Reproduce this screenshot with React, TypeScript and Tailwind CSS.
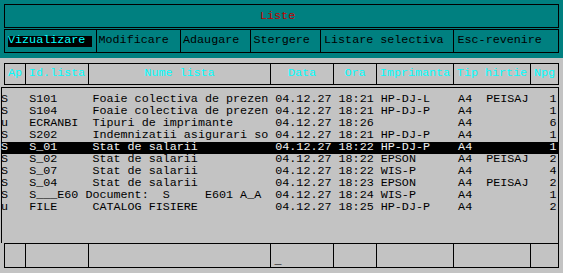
const rows = [
  'S   S101     Foaie colectiva de prezen 04.12.27 18:21 HP-DJ-L    A4  PEISAJ   1',
  'S   S104     Foaie colectiva de prezen 04.12.27 18:21 HP-DJ-P    A4           1',
  'u   ECRANBI  Tipuri de imprimante      04.12.27 18:26            A4           6',
  'S   S202     Indemnizatii asigurari so 04.12.27 18:21 HP-DJ-P    A4           1',
  'S   S_01     Stat de salarii           04.12.27 18:22 HP-DJ-P    A4           1',
  'S   S_02     Stat de salarii           04.12.27 18:22 EPSON      A4  PEISAJ   2',
  'S   S_07     Stat de salarii           04.12.27 18:22 WIS-P      A4           4',
  'S   S_04     Stat de salarii           04.12.27 18:23 EPSON      A4  PEISAJ   2',
  'S   S___E60 Document:  S     E601 A_A  04.12.27 18:24 WIS-P      A4           1',
  'u   FILE     CATALOG FISIERE           04.12.27 18:25 HP-DJ-P    A4           2',
];

const selected = 4;

// header / footer column cells (width includes right border)
const cols = [
  { w: 'w-[21px]', label: 'Ap' },
  { w: 'w-[63px]', label: 'Id.lista' },
  { w: 'w-[182px]', label: 'Nume lista' },
  { w: 'w-[63px]', label: 'Data' },
  { w: 'w-[43px]', label: 'Ora' },
  { w: 'w-[77px]', label: 'Imprimanta' },
  { w: 'w-[77px]', label: 'Tip hirtie' },
];

const MenuItem = ({ className, children }: { className: string; children: React.ReactNode }) => (
  <div className={`flex items-center h-full border-r border-black ${className}`}>{children}</div>
);

export default function App() {
  return (
    <div className="w-[563px] h-[273px] bg-[#c3c3c3] overflow-hidden font-['Liberation_Mono',monospace] text-[11.73px] leading-none whitespace-pre">
      {/* antet */}
      <div className="h-[58px] bg-[#008080] pt-[4px] pl-[4px]">
        <div className="w-[555px] h-[24px] border border-black flex items-center pl-[255px] pt-[1px] text-[#c00000]">
          Liste
        </div>
        <div className="mt-[1px] w-[555px] h-[24px] border border-black flex text-black">
          <MenuItem className="w-[92px] pl-[3px]">
            <span className="bg-black text-[#00ffff] h-[11px] w-[84px] flex items-center">Vizualizare</span>
          </MenuItem>
          <MenuItem className="w-[84px] pl-[1.5px]">Modificare</MenuItem>
          <MenuItem className="w-[70px] pl-[2px]">Adaugare</MenuItem>
          <MenuItem className="w-[70px] pl-[2.5px]">Stergere</MenuItem>
          <MenuItem className="w-[133px] pl-[3px]">Listare selectiva</MenuItem>
          <div className="flex-1 flex items-center pl-[3.5px]">Esc-revenire</div>
        </div>
      </div>

      {/* cap de tabel */}
      <div className="mt-[5px] ml-[4px] w-[555px] h-[22px] border border-black flex text-[#00ffff]">
        {cols.map((c) => (
          <div key={c.label} className={`${c.w} h-full border-r border-black flex items-center justify-center`}>
            {c.label}
          </div>
        ))}
        <div className="flex-1 flex items-center justify-center">Npg</div>
      </div>

      {/* lista */}
      <div className="mt-[2px] ml-[1px] w-[558px] h-[156px] border-t border-l border-r border-black pt-[5.5px] text-black">
        {rows.map((r, i) => (
          <div
            key={i}
            className={`h-[12px] flex items-center -ml-[1px] ${i === selected ? 'bg-black text-[#f0f0f0]' : ''}`}
          >
            {r}
          </div>
        ))}
      </div>

      {/* subsol */}
      <div className="ml-[4px] w-[555px] h-[25px] border border-black flex">
        {cols.map((c, i) => (
          <div key={c.label} className={`${c.w} h-full border-r border-black flex items-end pl-[3.5px]`}>
            {i === 3 ? <span className="font-bold translate-y-[1px]">_</span> : ''}
          </div>
        ))}
        <div className="flex-1" />
      </div>
    </div>
  );
}
